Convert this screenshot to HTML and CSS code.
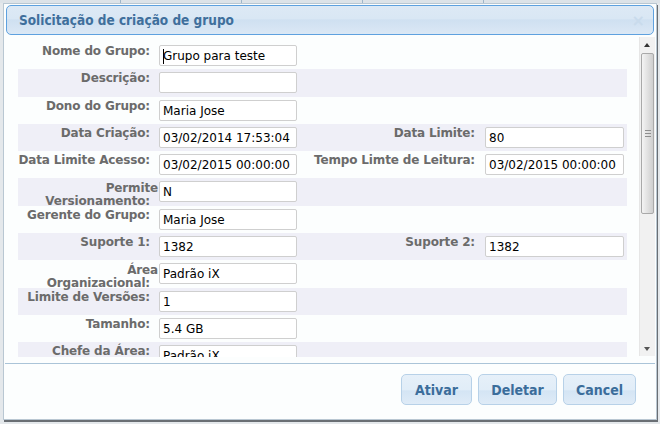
FILE: index.html
```html
<!DOCTYPE html>
<html lang="pt">
<head>
<meta charset="utf-8">
<title>Solicitação de criação de grupo</title>
<link rel="stylesheet" href="styles.css">
</head>
<body>
<div class="page-strip"><span></span><span></span><span></span><span></span></div>
<div class="dialog">
  <div class="hdr">
    <span class="title">Solicitação de criação de grupo</span>
    <span class="close">×</span>
  </div>
  <div class="body">
    <div class="pane">
      <div class="row">
        <div class="lbl">Nome do Grupo:</div>
        <div class="fld"><div class="inp"><span class="caret"></span>Grupo para teste</div></div>
        <div class="lbl"></div><div class="fld"></div>
      </div>
      <div class="row alt">
        <div class="lbl">Descrição:</div>
        <div class="fld"><div class="inp"></div></div>
        <div class="lbl"></div><div class="fld"></div>
      </div>
      <div class="row">
        <div class="lbl">Dono do Grupo:</div>
        <div class="fld"><div class="inp">Maria Jose</div></div>
        <div class="lbl"></div><div class="fld"></div>
      </div>
      <div class="row alt">
        <div class="lbl">Data Criação:</div>
        <div class="fld"><div class="inp">03/02/2014 17:53:04</div></div>
        <div class="lbl">Data Limite:</div>
        <div class="fld"><div class="inp wide">80</div></div>
      </div>
      <div class="row">
        <div class="lbl">Data Limite Acesso:</div>
        <div class="fld"><div class="inp">03/02/2015 00:00:00</div></div>
        <div class="lbl">Tempo Limte de Leitura:</div>
        <div class="fld"><div class="inp wide">03/02/2015 00:00:00</div></div>
      </div>
      <div class="row alt">
        <div class="lbl two"><span class="l1">Permite</span><span class="l2">Versionamento:</span></div>
        <div class="fld"><div class="inp">N</div></div>
        <div class="lbl"></div><div class="fld"></div>
      </div>
      <div class="row">
        <div class="lbl">Gerente do Grupo:</div>
        <div class="fld"><div class="inp">Maria Jose</div></div>
        <div class="lbl"></div><div class="fld"></div>
      </div>
      <div class="row alt">
        <div class="lbl">Suporte 1:</div>
        <div class="fld"><div class="inp">1382</div></div>
        <div class="lbl">Suporte 2:</div>
        <div class="fld"><div class="inp wide">1382</div></div>
      </div>
      <div class="row">
        <div class="lbl two"><span class="l1">Área</span><span class="l2">Organizacional:</span></div>
        <div class="fld"><div class="inp">Padrão iX</div></div>
        <div class="lbl"></div><div class="fld"></div>
      </div>
      <div class="row alt">
        <div class="lbl">Limite de Versões:</div>
        <div class="fld"><div class="inp">1</div></div>
        <div class="lbl"></div><div class="fld"></div>
      </div>
      <div class="row">
        <div class="lbl">Tamanho:</div>
        <div class="fld"><div class="inp">5.4 GB</div></div>
        <div class="lbl"></div><div class="fld"></div>
      </div>
      <div class="row alt">
        <div class="lbl">Chefe da Área:</div>
        <div class="fld"><div class="inp">Padrão iX</div></div>
        <div class="lbl"></div><div class="fld"></div>
      </div>
    </div>
    <div class="vscroll">
      <div class="arrow up"></div>
      <div class="track">
        <div class="thumb"><span class="grip"></span></div>
      </div>
      <div class="arrow down"></div>
    </div>
  </div>
  <div class="ftr">
    <button class="btn">Ativar</button>
    <button class="btn">Deletar</button>
    <button class="btn">Cancel</button>
  </div>
</div>
</body>
</html>
```

FILE: styles.css
```css
html, body {
  margin: 0;
  padding: 0;
}
body {
  width: 660px;
  height: 424px;
  overflow: hidden;
  background: #e4e8eb;
  font-family: "DejaVu Sans", Verdana, sans-serif;
  position: relative;
}
.page-strip {
  height: 3px;
  background: #dde3e8;
  display: flex;
  position: absolute;
  left: 0;
  right: 0;
  top: 0;
}
.page-strip span {
  width: 120px;
  border-right: 1px solid #9fb6c9;
}
.dialog {
  position: relative;
  margin: 3px 0 0 3px;
  width: 652px;
  height: 415px;
  background: #fcfefe;
  border: 1px solid #b9c7d2;
  box-shadow: 1px 2px 0 #6a6f74;
  display: flex;
  flex-direction: column;
}
.hdr {
  margin: 1px 2px 0 2px;
  height: 28px;
  border: 1px solid #5ea1df;
  border-radius: 5px;
  background: linear-gradient(#dde9f5 0%, #d9e7f4 45%, #cfe0f1 50%, #dbe8f5 100%);
  display: flex;
  align-items: center;
  justify-content: space-between;
  padding: 0 8px 0 12px;
}
.title {
  font-weight: bold;
  font-size: 13.5px;
  font-stretch: condensed;
  color: #3f6f9c;
  padding-bottom: 1px;
}
.close {
  font-size: 16px;
  color: #c9dbec;
  font-weight: bold;
}
.body {
  display: flex;
  height: 321px;
  margin: 1px 0 0 2px;
}
.pane {
  flex: 1;
  overflow: hidden;
  padding: 6px 0 0 12px;
}
.row {
  display: grid;
  grid-template-columns: 138px 144px 182px 145px;
  width: 609px;
  height: 27.3px;
  box-sizing: border-box;
}
.row.alt {
  background: #efeff7;
}
.lbl {
  text-align: right;
  font-weight: bold;
  font-size: 12px;
  letter-spacing: -0.15px;
  line-height: 13px;
  color: #6b6b6b;
  padding: 3px 6px 0 0;
  white-space: nowrap;
}
.lbl:nth-child(3) {
  padding-right: 7px;
}
.lbl.two {
  padding-top: 4px;
  position: relative;
  z-index: 1;
}
.lbl.two span {
  display: block;
}
.lbl.two .l1 {
  margin-right: -8px;
}
.fld {
  padding: 3px 0 0 3px;
}
.inp {
  width: 138px;
  height: 21px;
  box-sizing: border-box;
  background: #fff;
  border: 1px solid #cfcfcf;
  border-radius: 2px;
  font-size: 12px;
  line-height: 20px;
  color: #000;
  padding-left: 3px;
  white-space: nowrap;
  overflow: hidden;
  position: relative;
}
.inp.wide {
  width: 139px;
}
.caret {
  position: absolute;
  left: 3px;
  top: 3px;
  width: 1px;
  height: 15px;
  background: #000;
}
.vscroll {
  width: 15px;
  margin: 1px 1px 1px 0;
  background: #f1f1f1;
  border-left: 1px solid #e6e6e6;
  display: flex;
  flex-direction: column;
}
.arrow {
  height: 16px;
  position: relative;
}
.arrow::after {
  content: "";
  position: absolute;
  left: 4px;
  width: 0;
  height: 0;
  border-left: 3.5px solid transparent;
  border-right: 3.5px solid transparent;
}
.arrow.up::after {
  top: 6px;
  border-bottom: 4px solid #333;
}
.arrow.down::after {
  top: 7px;
  border-top: 4px solid #555;
}
.track {
  flex: 1;
  padding: 0 1px;
}
.thumb {
  height: 161px;
  border: 1px solid #a9a9a9;
  border-radius: 2px;
  background: linear-gradient(90deg, #f4f4f4 0%, #e3e3e3 45%, #cfcfcf 100%);
  display: flex;
  align-items: center;
  justify-content: center;
  box-sizing: border-box;
}
.grip {
  width: 6px;
  height: 5px;
  border-top: 1px solid #8e8e8e;
  border-bottom: 1px solid #8e8e8e;
  position: relative;
}
.grip::after {
  content: "";
  position: absolute;
  left: 0;
  right: 0;
  top: 2px;
  height: 1px;
  background: #8e8e8e;
}
.ftr {
  margin: 6px 0 0 1px;
  border-top: 1px solid #aac4d8;
  width: 650px;
  flex: 1;
  display: flex;
  justify-content: flex-end;
  align-items: flex-start;
  gap: 6px;
  padding: 10px 19px 0 0;
  box-sizing: border-box;
}
.btn {
  height: 31px;
  border: 1px solid #b7d1e8;
  border-radius: 5px;
  background: linear-gradient(#e6f0f9 0%, #e1edf8 50%, #d4e5f4 55%, #dfebf7 100%);
  color: #3b6d9b;
  font-family: "DejaVu Sans", Verdana, sans-serif;
  font-stretch: condensed;
  font-weight: bold;
  font-size: 14px;
  padding: 0 4px;
  margin: 0;
}
.btn:nth-child(1) { width: 71px; }
.btn:nth-child(2) { width: 79px; }
.btn:nth-child(3) { width: 73px; }
```
